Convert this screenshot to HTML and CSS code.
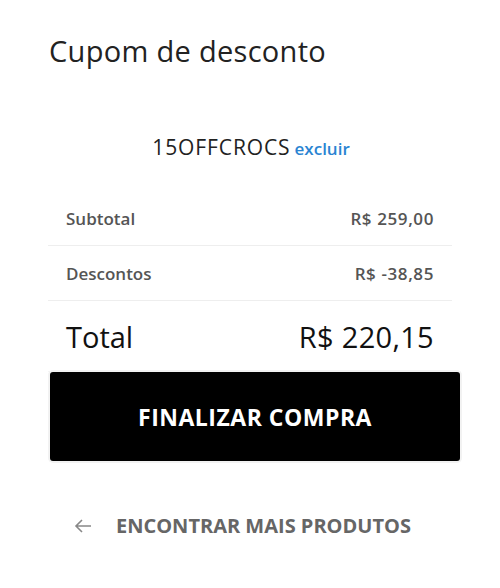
FILE: index.html
```html
<!DOCTYPE html>
<html lang="pt-BR">
<head>
<meta charset="utf-8">
<link rel="stylesheet" href="styles.css">
</head>
<body>
<div class="panel">
  <h2 class="title">Cupom de desconto</h2>
  <div class="coupon">
    <span class="code">15OFFCROCS</span>
    <a class="remove" href="#">excluir</a>
  </div>
  <div class="summary">
    <div class="row"><span>Subtotal</span><span>R$ 259,00</span></div>
    <div class="row"><span>Descontos</span><span>R$ -38,85</span></div>
  </div>
  <div class="total"><span>Total</span><span>R$ 220,15</span></div>
  <button class="checkout">FINALIZAR COMPRA</button>
  <a class="more" href="#">
    <svg class="arrow" width="18" height="14" viewBox="0 0 18 14"><path d="M17 7H2M8 1L2 7l6 6" fill="none" stroke="#888" stroke-width="1.6"/></svg>
    <span>ENCONTRAR MAIS PRODUTOS</span>
  </a>
</div>
</body>
</html>
```
FILE: styles.css
```css
html, body { margin: 0; padding: 0; background: #fff; }
body { font-family: "Open Sans", "Liberation Sans", sans-serif; color: #222; }
.panel { width: 410px; margin-left: 48px; padding-top: 32px; }
.title { margin: 0 0 0 1px; font-size: 29px; font-weight: 400; line-height: 38px; letter-spacing: 0.3px; color: #222; }
.coupon { display: flex; justify-content: center; align-items: baseline; gap: 4px; margin-top: 63px; margin-left: -4px; height: 28px; line-height: 28px; }
.code { font-size: 21px; letter-spacing: 0.9px; color: #222; }
.remove { font-size: 17px; font-weight: 600; color: #2a84d2; text-decoration: none; }
.summary { margin-top: 30px; width: 404px; }
.row { display: flex; justify-content: space-between; align-items: center; height: 54px; padding: 0 18px; border-bottom: 1px solid #eee; font-size: 17px; font-weight: 600; color: #555; }
.row span:last-child { letter-spacing: 0.6px; }
.total { display: flex; justify-content: space-between; align-items: center; width: 368px; padding: 0 18px; height: 70px; border-bottom: 1px solid #f4f4f4; font-size: 29px; font-weight: 500; color: #111; }
.total span:last-child { letter-spacing: 0.3px; }
.checkout { display: block; width: 410px; height: 89px; margin-left: 2px; background: #000; color: #fff; border: none; border-radius: 3px; box-shadow: 0 0 0 2px #f2f2f2; font-family: "Open Sans", "Liberation Sans", sans-serif; font-size: 23px; font-weight: 700; letter-spacing: 0.5px; }
.more { display: flex; align-items: center; gap: 24px; margin: 51px 0 0 26px; text-decoration: none; color: #666; font-size: 20px; font-weight: 700; letter-spacing: 0; }
.arrow { display: block; }
```
